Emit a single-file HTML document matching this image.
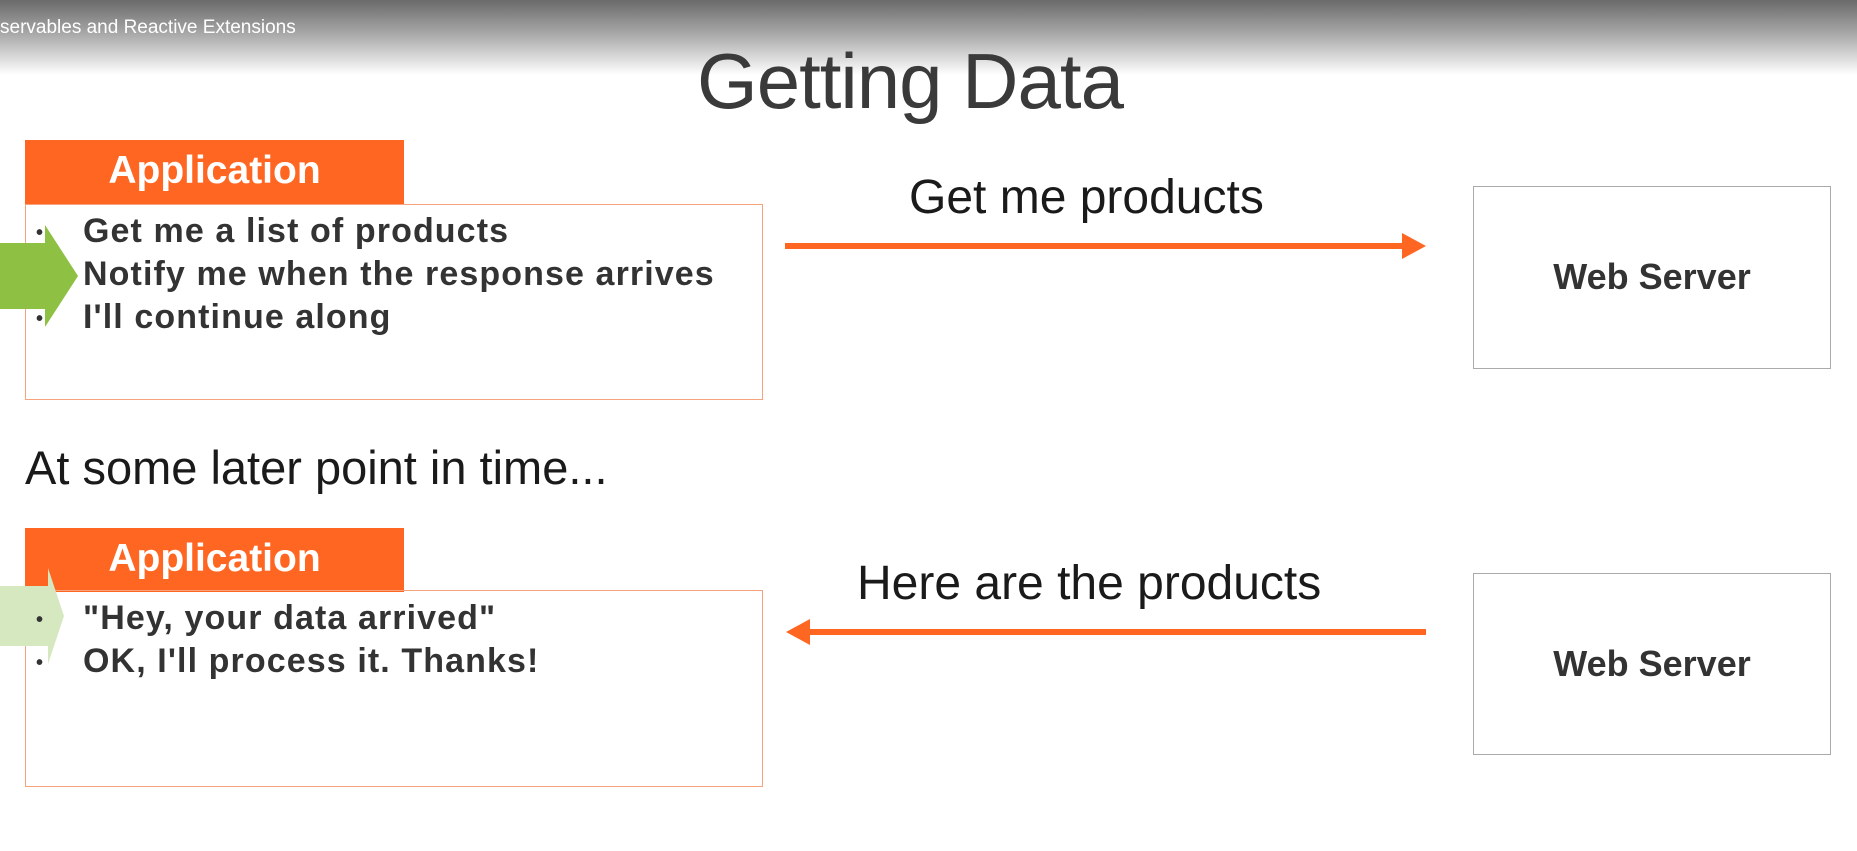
<!DOCTYPE html>
<html><head><meta charset="utf-8"><style>
body{margin:0;width:1857px;height:851px;background:#fff;position:relative;overflow:hidden;font-family:"Liberation Sans",sans-serif;}
.abs{position:absolute}
.top{left:0;top:0;width:1857px;height:75px;background:linear-gradient(#6a6a6a,#a8a8a8 45%,#fff)}
.sub{left:0;top:17px;color:#fff;font-size:19px}
.title{left:0;width:1820px;text-align:center;top:36px;font-size:78px;color:#3a3a3a;font-weight:300;letter-spacing:-1px}
.hdr{background:#ff6622;color:#fff;font-weight:bold;font-size:39px;text-align:center;line-height:62px;width:379px;height:64px;left:25px}
.box{border:1.5px solid #f4a37c;left:25px;width:738px;box-sizing:border-box;background:transparent}
.li{left:36px;font-weight:bold;font-size:34px;color:#333;letter-spacing:1.1px}
.li span{display:inline-block;width:47px;font-size:20px;vertical-align:middle;letter-spacing:0}
.lbl{font-size:48px;color:#1a1a1a}
.ws{border:1.5px solid #aaa;left:1473px;width:358px;box-sizing:border-box;text-align:center;font-weight:bold;font-size:36px;color:#333}
.line{background:#ff6622;height:6px}
</style></head><body>
<div class="abs top"></div>
<div class="abs sub">servables and Reactive Extensions</div>
<div class="abs title">Getting Data</div>

<div class="abs hdr" style="top:140px">Application</div>
<div class="abs box" style="top:204px;height:196px"></div>
<svg class="abs" style="left:0;top:225px" width="80" height="102"><polygon points="0,18 45,18 45,0 78,51 45,102 45,84 0,84" fill="#8dc043"/></svg>
<div class="abs li" style="top:212px"><span>•</span>Get me a list of products</div>
<div class="abs li" style="top:255px"><span></span>Notify me when the response arrives</div>
<div class="abs li" style="top:298px"><span>•</span>I'll continue along</div>

<div class="abs lbl" style="left:909px;top:170px">Get me products</div>
<div class="abs line" style="left:785px;top:243px;width:622px"></div>
<svg class="abs" style="left:1402px;top:233px" width="24" height="26"><polygon points="0,0 24,13 0,26" fill="#ff6622"/></svg>
<div class="abs ws" style="top:186px;height:183px;line-height:180px">Web Server</div>

<div class="abs lbl" style="left:25px;top:440px;font-size:47px">At some later point in time...</div>

<div class="abs hdr" style="top:528px">Application</div>
<div class="abs box" style="top:590px;height:197px"></div>
<svg class="abs" style="left:0;top:568px" width="64" height="96"><polygon points="0,18 48,18 48,0 64,48 48,96 48,78 0,78" fill="#d6e8bf"/></svg>
<div class="abs li" style="top:599px"><span>•</span>"Hey, your data arrived"</div>
<div class="abs li" style="top:642px"><span>•</span>OK, I'll process it. Thanks!</div>

<div class="abs lbl" style="left:857px;top:556px">Here are the products</div>
<div class="abs line" style="left:806px;top:629px;width:620px"></div>
<svg class="abs" style="left:786px;top:619px" width="24" height="26"><polygon points="24,0 0,13 24,26" fill="#ff6622"/></svg>
<div class="abs ws" style="top:573px;height:182px;line-height:180px">Web Server</div>
</body></html>
